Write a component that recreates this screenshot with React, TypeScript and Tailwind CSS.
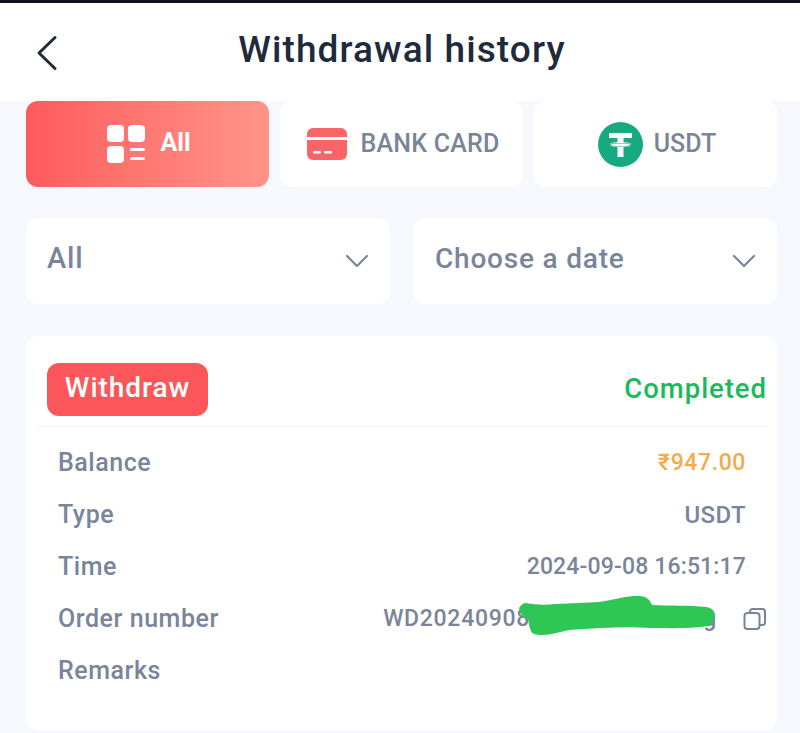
import React from "react";

const Row = ({ label, children }: { label: string; children?: React.ReactNode }) => (
  <div className="flex h-[52px] items-center justify-between text-[25px] font-medium tracking-[0.55px] text-[#7a859c]">
    <span>{label}</span>
    {children}
  </div>
);

const Chevron = () => (
  <svg width="26" height="16" viewBox="0 0 26 16" fill="none" stroke="#7c869b" strokeWidth="2.2" strokeLinecap="round" strokeLinejoin="round">
    <path d="M3 3l10 10L23 3" />
  </svg>
);

export default function App() {
  return (
    <div className="h-[733px] w-[800px] overflow-hidden bg-[#f7f8fe] font-['Roboto',sans-serif]">
      <div className="h-[3px] bg-[#10131f]" />
      <header className="relative flex h-[98px] items-center justify-center bg-white pb-[4px] pl-[4px]">
        <svg className="absolute left-[36px] top-[32px]" width="24" height="36" viewBox="0 0 24 36" fill="none" stroke="#1f2a3d" strokeWidth="3" strokeLinecap="round" strokeLinejoin="round">
          <path d="M19 2.500L3 18l16 15.500" />
        </svg>
        <h1 className="text-[37px] font-medium tracking-[1.100px] text-[#1f2a3d]">Withdrawal history</h1>
      </header>

      <div className="flex flex-col pl-[26px] pr-[23px]">
        <div className="grid grid-cols-3 gap-[11px]">
          <div className="flex h-[86px] items-center justify-center gap-[15px] rounded-[12px] bg-gradient-to-r from-[#fd5a5c] to-[#ff9489] pl-[3px] text-white">
            <svg width="38" height="38" viewBox="0 0 38 38" fill="#fff">
              <rect x="0" y="0" width="17" height="17" rx="4" />
              <rect x="21" y="0" width="17" height="17" rx="4" />
              <rect x="0" y="21" width="17" height="17" rx="4" />
              <rect x="23" y="23" width="15" height="3" rx="1.500" />
              <rect x="23" y="32" width="15" height="3" rx="1.500" />
            </svg>
            <span className="-mt-[2px] text-[25px] font-bold">All</span>
          </div>
          <div className="flex h-[86px] items-center justify-center gap-[14px] rounded-[12px] bg-white pl-[3px]">
            <svg width="40" height="32" viewBox="0 0 40 32">
              <path d="M0 6a6 6 0 0 1 6-6h28a6 6 0 0 1 6 6v3H0z" fill="#fb6467" />
              <path d="M0 12h40v14a6 6 0 0 1-6 6H6a6 6 0 0 1-6-6z" fill="#fb6467" />
              <rect x="6" y="23" width="8" height="2.500" rx="1.200" fill="#fff" />
              <rect x="17" y="23" width="8" height="2.500" rx="1.200" fill="#fff" />
            </svg>
            <span className="text-[25px] font-medium tracking-[0.200px] text-[#7a8498]">BANK CARD</span>
          </div>
          <div className="flex h-[86px] items-center justify-center gap-[11px] rounded-[12px] bg-white pl-[3px]">
            <svg width="45" height="45" viewBox="0 0 45 45">
              <circle cx="22.500" cy="22.500" r="22.500" fill="#17a97f" />
              <path d="M11 11h23v5h-8.500v4.300c4.600.3 8.500 1.200 8.500 2.400s-3.900 2.100-8.500 2.400V35h-6V25.100c-4.600-.3-8.500-1.200-8.500-2.400s3.900-2.100 8.500-2.400V16H11z" fill="#fff" />
              <path d="M10 22.700c0-1 5.500-1.800 12.500-1.800S35 21.700 35 22.700s-5.500 1.800-12.500 1.800S10 23.700 10 22.700z" fill="#17a97f" />
              <path d="M12.500 22.700c0-.8 4.500-1.300 10-1.300s10 .5 10 1.300-4.500 1.300-10 1.300-10-.5-10-1.300z" fill="#fff" />
            </svg>
            <span className="text-[25px] font-medium tracking-[0px] text-[#7a8498]">USDT</span>
          </div>
        </div>

        <div className="mt-[31px] grid grid-cols-2 gap-[23px]">
          <div className="flex h-[86px] items-center justify-between rounded-[12px] bg-white pb-[4px] pl-[21px] pr-[20px] text-[29px] font-medium tracking-[0.800px] text-[#7a859c]">
            <span>All</span>
            <span className="mt-[4px]"><Chevron /></span>
          </div>
          <div className="flex h-[86px] items-center justify-between rounded-[12px] bg-white pb-[4px] pl-[22px] pr-[20px] text-[28px] font-medium tracking-[0.800px] text-[#7a859c]">
            <span>Choose a date</span>
            <span className="mt-[4px]"><Chevron /></span>
          </div>
        </div>

        <div className="mt-[32px] h-[394px] rounded-[12px] bg-white px-[11px] pt-[27px]">
          <div className="-mr-[2px] flex h-[64px] items-start justify-between border-b border-[#f3f4f8] pl-[10px] pr-[1px]">
            <span className="flex h-[53px] w-[161px] items-center justify-center rounded-[12px] bg-[#fb5659] pb-[4px] text-[28px] font-medium tracking-[0.950px] text-white">Withdraw</span>
            <span className="mt-[5px] text-[27.500px] font-medium tracking-[0.950px] text-[#1cb95c]">Completed</span>
          </div>
          <div className="pl-[21px] pr-[20px] pt-[10px]">
            <Row label="Balance"><span className="text-[23px] tracking-[0.600px] text-[#f7a94b]">₹947.00</span></Row>
            <Row label="Type"><span className="text-[24px] tracking-[0.400px]">USDT</span></Row>
            <Row label="Time"><span className="text-[23px] tracking-[0.150px]">2024-09-08 16:51:17</span></Row>
            <Row label="Order number">
              <span className="relative -mr-[21px] flex items-center gap-[26px] text-[23px] tracking-[0.700px]">
                <span>WD20240908</span>
                <span className="w-[161px] text-right">g</span>
                <svg width="24" height="24" viewBox="0 0 24 24" fill="none" stroke="#7a8498" strokeWidth="2" strokeLinejoin="round">
                  <rect x="1.500" y="6" width="15" height="16" rx="3" />
                  <path d="M7 6V4.500a2.500 2.500 0 0 1 2.500-2.500h10A2.500 2.500 0 0 1 22 4.500v11a2.500 2.500 0 0 1-2.500 2.500h-3" />
                </svg>
                <svg className="absolute left-[136px] top-[-6px]" width="196" height="40" viewBox="0 0 196 40">
                  <path d="M0 12C2 9 4 7 7 7C17 9 27 9 37 8C52 7 67 7 80 6C95 4 110 -1 120 0C126 0 131 3 133 9C150 10 170 9 187 11C192 12 196 14 195 18C195 24 193 28 190 30C170 33 150 32 133 32C115 31 100 31 83 32C70 33 60 33 50 34C40 36 32 39 23 39C17 39 13 38 12 35C10 31 10 27 9 23C6 22 2 20 0 12z" fill="#2ec655" />
                </svg>
              </span>
            </Row>
            <Row label="Remarks" />
          </div>
        </div>
      </div>
    </div>
  );
}
